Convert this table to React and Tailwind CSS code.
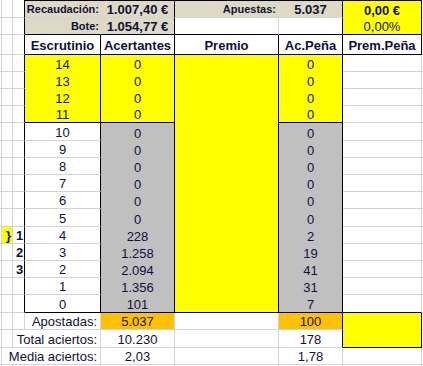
import React from "react";
import clsx from "clsx";

const BG = {
  w: "bg-white",
  y: "bg-[#ffff00]",
  s: "bg-[#c0c0c0]",
  o: "bg-[#ffc000]",
  t: "bg-[#ddd9c4]",
};

const RB = { g: "border-r border-r-[#d4d4d4]", k: "border-r border-r-black" };
const BB = { g: "border-b border-b-[#d4d4d4]", k: "border-b border-b-black" };

/** One spreadsheet cell: borders sit on the right/bottom edge like Excel */
const Cell = ({ bg = "w", rb, bb, bt, text, align = "center", bold, small, pad }) => (
  <div
    className={clsx(
      "flex min-w-0 items-end whitespace-nowrap leading-[15px]",
      BG[bg],
      rb && RB[rb],
      bb && BB[bb],
      bt && "border-t border-t-black",
      align === "center" && "justify-center",
      align === "right" && "justify-end",
      align === "left" && "justify-start pl-[2px]",
      bold && "font-bold",
      small ? "text-[11px]" : "text-[13px]",
      pad
    )}
  >
    {text}
  </div>
);

const gutter = [
  { rb: "g", bb: "g" },
  { rb: "g", bb: "g" },
  { rb: "k", bb: "g" },
];

// top block: totals
const topRows = [
  [
    ...gutter,
    { bg: "t", bt: true, bb: "g", text: "Recaudación:", align: "right", bold: true, small: true, pad: "pr-[2px]" },
    { bg: "t", bt: true, rb: "k", bb: "g", text: "1.007,40 €", bold: true },
    { bg: "t", bt: true, bb: "g", text: "Apuestas:", align: "right", bold: true, small: true, pad: "pr-[3px]" },
    { bg: "t", bt: true, rb: "k", bb: "g", text: "5.037", bold: true },
    { bg: "y", bt: true, rb: "k", text: "0,00 €", bold: true },
    { bb: "g" },
  ],
  [
    ...gutter,
    { bg: "t", bb: "k", text: "Bote:", align: "right", bold: true, small: true, pad: "pr-[2px]" },
    { bg: "t", rb: "k", bb: "k", text: "1.054,77 €", bold: true },
    { rb: "g", bb: "k" },
    { rb: "k", bb: "k" },
    { bg: "y", rb: "k", bb: "k", text: "0,00%" },
    { bb: "g" },
  ],
  [
    ...gutter,
    ...["Escrutinio", "Acertantes", "Premio", "Ac.Peña", "Prem.Peña"].map((t) => ({
      rb: "k",
      bb: "k",
      text: t,
      bold: true,
      pad: "pb-[1px]",
    })),
    { bb: "g" },
  ],
];

const acertantes = ["0", "0", "0", "0", "0", "0", "0", "0", "0", "0", "228", "1.258", "2.094", "1.356", "101"];
const acPena = ["0", "0", "0", "0", "0", "0", "0", "0", "0", "0", "2", "19", "41", "31", "7"];
const marks = { 4: "1", 3: "2", 2: "3" };

const dataRows = acertantes.map((ac, i) => {
  const n = 14 - i;
  const top = n >= 11;
  const sep = n === 11;
  const last = n === 0;
  return [
    { rb: "g", bb: "g" },
    n === 4
      ? { bg: "y", rb: "g", bb: "g", text: "}", align: "left", bold: true, pad: "pl-[4px]" }
      : { rb: "g", bb: "g" },
    { rb: "k", bb: "g", text: marks[n], align: "left", bold: true, pad: "pl-[3px]" },
    { bg: top ? "y" : "w", rb: "k", bb: top ? (sep ? "k" : undefined) : last ? "k" : "g", text: String(n) },
    { bg: top ? "y" : "s", rb: "k", bb: sep || last ? "k" : undefined, text: ac },
    { bg: "y", rb: "k", bb: last ? "k" : undefined },
    { bg: top ? "y" : "s", rb: "k", bb: sep || last ? "k" : undefined, text: acPena[i] },
    { rb: "g", bb: last ? "k" : "g" },
    { bb: "g" },
  ];
});

// bottom block: summary
const bottomRows = [
  [
    { rb: "g", bb: "g" },
    { rb: "g", bb: "g" },
    { rb: "g", bb: "g" },
    { rb: "g", bb: "g", text: "Apostadas:", align: "right", pad: "pr-[3px]" },
    { bg: "o", rb: "g", bb: "g", text: "5.037" },
    { rb: "g", bb: "g" },
    { bg: "o", rb: "k", bb: "g", text: "100" },
    { bg: "y", rb: "k" },
    { bb: "g" },
  ],
  [
    { rb: "g", bb: "g" },
    { rb: "g", bb: "g" },
    { bb: "g" },
    { rb: "g", bb: "g", text: "Total aciertos:", align: "right", pad: "pr-[3px]" },
    { rb: "g", bb: "g", text: "10.230" },
    { rb: "g", bb: "g" },
    { rb: "k", bb: "g", text: "178" },
    { bg: "y", rb: "k", bb: "k" },
    { bb: "g" },
  ],
  [
    { rb: "g", bb: "g" },
    { bb: "g" },
    { bb: "g" },
    { rb: "g", bb: "g", text: "Media aciertos:", align: "right", pad: "pr-[3px]" },
    { rb: "g", bb: "g", text: "2,03" },
    { rb: "g", bb: "g" },
    { rb: "g", bb: "g", text: "1,78" },
    { rb: "g", bb: "g" },
    { bb: "g" },
  ],
  Array.from({ length: 9 }, (_, i) => (i < 8 ? { rb: "g" } : {})),
];

const Quiniela = () => {
  const rows = [...topRows, ...dataRows, ...bottomRows];

  return (
    <div className="h-[366px] w-[423px] overflow-hidden bg-white font-['Liberation_Sans',Arial,sans-serif] text-[#10103a]">
      <div className="grid h-full w-full grid-cols-[2px_11px_12px_76px_74px_104px_64px_79px_1fr] grid-rows-[18px_17px_20px_17px_17px_17px_17px_18px_17px_17px_17px_17px_18px_17px_17px_17px_17px_18px_17px_18px_17px_1fr]">
        {rows.map((row, r) => row.map((cell, c) => <Cell key={`${r}-${c}`} {...cell} />))}
      </div>
    </div>
  );
};

export default Quiniela;
